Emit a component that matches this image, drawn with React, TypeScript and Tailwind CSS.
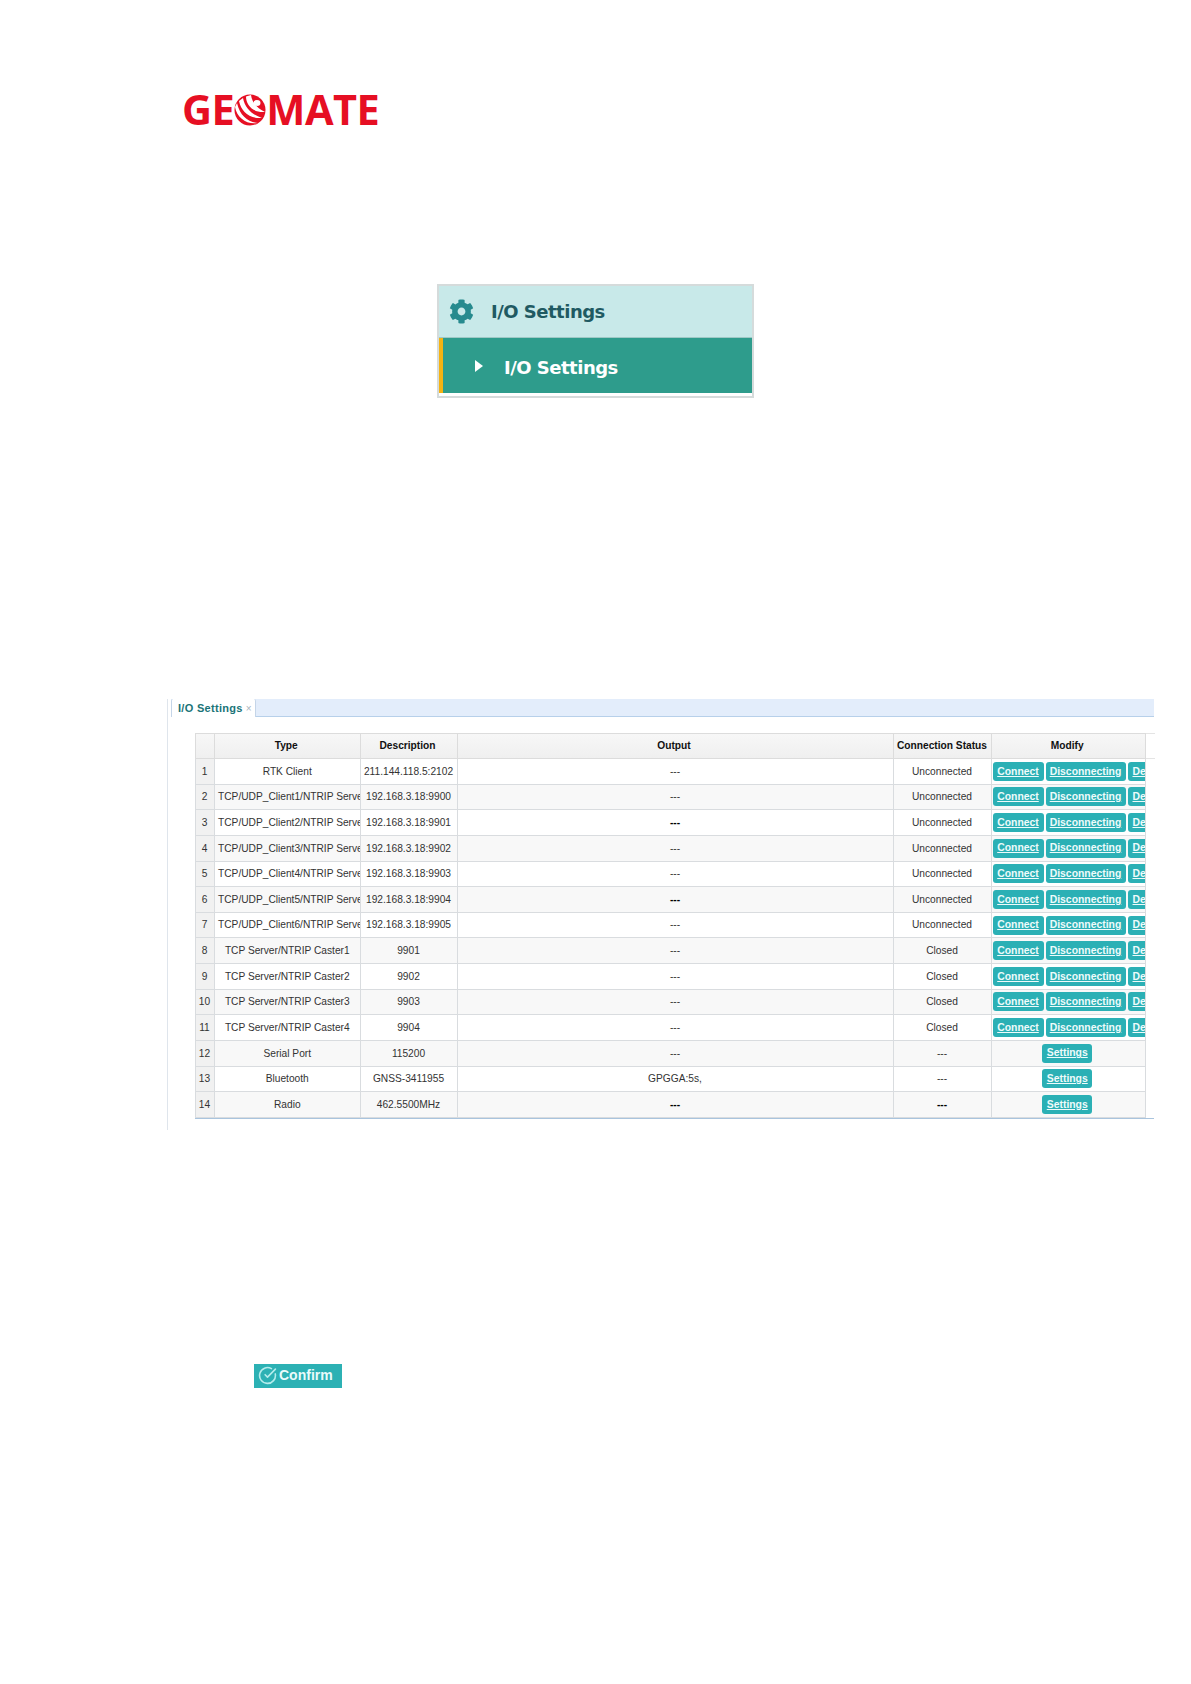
import React from "react";
import { CircleCheckBig } from "lucide-react";
import { FaCog } from "react-icons/fa";

type Row = {
  type: string;
  desc: string;
  output: string;
  status: string;
  left?: boolean;
  dark?: boolean;
  settings?: boolean;
};

const rows: Row[] = [
  { type: "RTK Client", desc: "211.144.118.5:2102", output: "---", status: "Unconnected" },
  { type: "TCP/UDP_Client1/NTRIP Server1", desc: "192.168.3.18:9900", output: "---", status: "Unconnected", left: true },
  { type: "TCP/UDP_Client2/NTRIP Server2", desc: "192.168.3.18:9901", output: "---", status: "Unconnected", left: true, dark: true },
  { type: "TCP/UDP_Client3/NTRIP Server3", desc: "192.168.3.18:9902", output: "---", status: "Unconnected", left: true },
  { type: "TCP/UDP_Client4/NTRIP Server4", desc: "192.168.3.18:9903", output: "---", status: "Unconnected", left: true },
  { type: "TCP/UDP_Client5/NTRIP Server5", desc: "192.168.3.18:9904", output: "---", status: "Unconnected", left: true, dark: true },
  { type: "TCP/UDP_Client6/NTRIP Server6", desc: "192.168.3.18:9905", output: "---", status: "Unconnected", left: true },
  { type: "TCP Server/NTRIP Caster1", desc: "9901", output: "---", status: "Closed" },
  { type: "TCP Server/NTRIP Caster2", desc: "9902", output: "---", status: "Closed" },
  { type: "TCP Server/NTRIP Caster3", desc: "9903", output: "---", status: "Closed" },
  { type: "TCP Server/NTRIP Caster4", desc: "9904", output: "---", status: "Closed" },
  { type: "Serial Port", desc: "115200", output: "---", status: "---", settings: true },
  { type: "Bluetooth", desc: "GNSS-3411955", output: "GPGGA:5s,", status: "---", settings: true },
  { type: "Radio", desc: "462.5500MHz", output: "---", status: "---", dark: true, settings: true },
];

const GeoSwirl = () => (
  <svg viewBox="0 0 32 32" className="h-[32px] w-[32px]">
    <circle cx="16" cy="16" r="15.5" fill="#e60f23" />
    <path d="M1 13 C3 24 13 31 24 29 C14 28 6 22 3 9 Z" fill="#fff" />
    <path d="M5 7 C7 17 15 25 28 24 C19 21 11 15 9 4 Z" fill="#fff" />
    <path d="M12 2.5 C12 11 19 19 31 18 C24 15 18 9 17 1 Z" fill="#fff" />
    <ellipse cx="23" cy="9" rx="3.5" ry="3" fill="#fff" />
  </svg>
);

const Btn = ({ children, className }: { children: React.ReactNode; className: string }) => (
  <a className={`flex h-[19px] shrink-0 items-center justify-center rounded-[3px] bg-[#2bb0b5] text-[10.4px] font-bold text-[#eefbfb] underline ${className}`}>
    {children}
  </a>
);

const App: React.FC = () => {
  return (
    <div className="h-[1684px] w-full bg-white font-['Liberation_Sans',Arial,sans-serif]">
      <div className="flex h-[134px] items-center pl-[182px] pt-[85px]">
        <div className="flex h-[40px] items-center font-['Open_Sans',sans-serif] text-[41.5px] leading-none font-bold tracking-[-0.5px] text-[#e60f23]">
          <span>GE</span>
          <GeoSwirl />
          <span>MATE</span>
        </div>
      </div>

      <div className="ml-[437px] mt-[150px] w-[317px] border-2 border-[#d5dbdb] bg-white pb-[3px]">
        <div className="flex h-[52px] items-center gap-[17px] border-b border-[#9fc9c6] bg-[#c8e9e9] pl-[10px] font-['DejaVu_Sans',sans-serif]">
          <FaCog className="h-[25px] w-[25px] text-[#268a8e]" />
          <span className="text-[18px] font-bold tracking-[-0.5px] text-[#1f5a62]">I/O Settings</span>
        </div>
        <div className="flex h-[55px] items-center border-l-[4px] border-[#f5b312] bg-[#2e9c8c] pl-[32px] font-['DejaVu_Sans',sans-serif]">
          <svg viewBox="0 0 8 12" className="h-[12px] w-[8px] fill-white">
            <path d="M0 0 L8 6 L0 12 Z" />
          </svg>
          <span className="ml-[21px] pt-[4px] text-[18px] font-bold tracking-[-0.5px] text-white">I/O Settings</span>
        </div>
      </div>

      <div className="ml-[167px] mt-[301px] h-[431px] w-[987px] border-l border-[#dfe5ec]">
        <div className="ml-[3px] flex h-[18px] items-end border-b border-[#b7d0ea] bg-[#e3edfb]">
          <div className="-mb-px flex h-[18px] w-[85px] items-center rounded-t-[2px] border-x border-[#c5d5e8] bg-white pl-[6px] text-[11px] font-bold tracking-[0.3px] text-[#1a7478]">
            I/O Settings
            <span className="ml-[3px] text-[10px] font-normal text-[#a9b4bd]">×</span>
          </div>
        </div>

        <div className="ml-[27px] mt-[16px] w-[959px] border-b border-[#a9c4de]">
          <table className="w-[959px] table-fixed border-collapse text-[10.2px] text-[#333]">
            <colgroup>
              <col className="w-[19px]" />
              <col className="w-[145.5px]" />
              <col className="w-[97px]" />
              <col className="w-[436px]" />
              <col className="w-[98px]" />
              <col className="w-[154.5px]" />
              <col className="w-[9px]" />
            </colgroup>
            <thead>
              <tr className="h-[25px] bg-gradient-to-b from-[#f7f7f7] to-[#efefef] font-bold text-[#111]">
                <th className="border border-[#dcdcdc]" />
                <th className="border border-[#dcdcdc] pr-[2px]">Type</th>
                <th className="border border-[#dcdcdc] pr-[2px]">Description</th>
                <th className="border border-[#dcdcdc] pr-[2px]">Output</th>
                <th className="whitespace-nowrap border border-[#dcdcdc]">Connection Status</th>
                <th className="border border-[#dcdcdc] pr-[2px]">Modify</th>
                <th className="border-y border-[#e4e4e4] bg-white" />
              </tr>
            </thead>
            <tbody>
              {rows.map((row, index) => (
                <tr key={index} className={`h-[25.64px] ${index % 2 === 1 ? "bg-[#f8f8f8]" : "bg-white"}`}>
                  <td className="border border-[#d9dcdf] bg-[#f1f1f1] pr-[1px] text-center">{index + 1}</td>
                  <td className={`overflow-hidden whitespace-nowrap border border-[#d9dcdf] ${row.left ? "pl-[3px]" : "text-center"}`}>
                    {row.type}
                  </td>
                  <td className="overflow-hidden whitespace-nowrap border border-[#d9dcdf] text-center">{row.desc}</td>
                  <td className={`border border-[#d9dcdf] text-center ${row.dark ? "font-bold text-black" : ""}`}>{row.output}</td>
                  <td className={`border border-[#d9dcdf] text-center ${row.settings && row.dark ? "font-bold text-black" : ""}`}>{row.status}</td>
                  <td className="overflow-hidden border border-[#d9dcdf] p-0">
                    {row.settings ? (
                      <div className="flex justify-center pr-[2px]">
                        <Btn className="w-[50px]">Settings</Btn>
                      </div>
                    ) : (
                      <div className="flex items-center pl-[1px]">
                        <Btn className="w-[51px]">Connect</Btn>
                        <span className="mx-[1px] h-[15px] w-px bg-[#c2185b]" />
                        <Btn className="w-[80px]">Disconnecting</Btn>
                        <span className="mx-[1px] h-[15px] w-px bg-[#9aa5ad]" />
                        <Btn className="w-[40px] justify-start pl-[5px]">Delete</Btn>
                      </div>
                    )}
                  </td>
                  <td className="border-0 bg-white" />
                </tr>
              ))}
            </tbody>
          </table>
        </div>
      </div>

      <div className="ml-[254px] mt-[234px] flex h-[24px] w-[88px] items-center gap-[2px] bg-[#2cb1b4] pb-[1px] pl-[4px] text-[14px] font-bold text-[#e9fbfb]">
        <CircleCheckBig className="h-[19px] w-[19px] text-[#b5ecec]" strokeWidth={2} />
        Confirm
      </div>
    </div>
  );
};

export default App;
